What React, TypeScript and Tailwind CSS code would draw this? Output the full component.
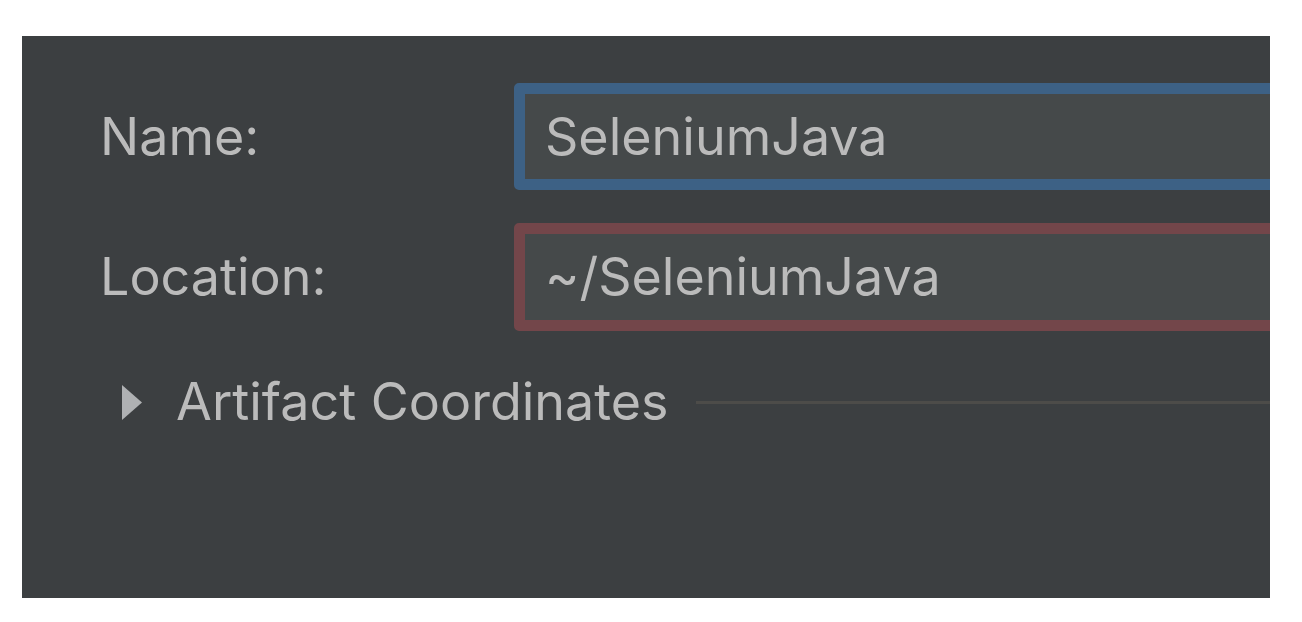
export default function App() {
    return (
        <div className="min-h-screen bg-white pt-[36px] pl-[22px]" style={{ fontFamily: "Inter, 'Liberation Sans', sans-serif" }}>
            <div className="w-[1248px] h-[562px] bg-[#3c3f41] overflow-hidden pt-[47px] pl-[78px]">

                <div className="flex items-center">
                    <div className="w-[414px] shrink-0 text-[52px] leading-none text-[#bbbbbb]">Name:</div>
                    <div className="w-[800px] shrink-0 h-[107px] rounded-[5px] border-[11px] border-[#3d6185] bg-[#45494a] flex items-center pl-[20px] text-[52px] leading-none text-[#bbbbbb]">
                        SeleniumJava
                    </div>
                </div>

                <div className="flex items-center mt-[33px]">
                    <div className="w-[414px] shrink-0 text-[52px] leading-none text-[#bbbbbb]">Location:</div>
                    <div className="w-[800px] shrink-0 h-[108px] rounded-[5px] border-[11px] border-[#73464a] bg-[#45494a] flex items-center pl-[20px] text-[52px] leading-none text-[#bbbbbb]">
                        ~/SeleniumJava
                    </div>
                </div>

                <div className="flex items-center mt-[46px] h-[50px] ml-[22px]">
                    <svg width="20" height="35" viewBox="0 0 20 35" className="shrink-0">
                        <path d="M0 0 L20 17.5 L0 35 Z" fill="#afb1b3" />
                    </svg>
                    <span className="ml-[34px] text-[52px] leading-none text-[#bbbbbb] whitespace-nowrap">Artifact Coordinates</span>
                    <div className="ml-[27px] flex-1 h-[3px] bg-[#4d4c49] min-w-[600px]" />
                </div>

            </div>
        </div>
    );
}
